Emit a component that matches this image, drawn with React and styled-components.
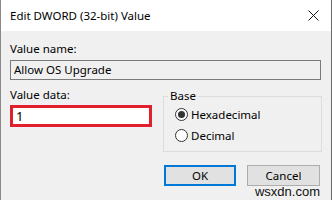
import React from 'react'
import styled, { createGlobalStyle } from 'styled-components'

const GlobalStyle = createGlobalStyle`
  html, body {
    margin: 0;
    padding: 0;
    background: #f0f0f0;
  }
  * {
    box-sizing: border-box;
  }
`

const Dialog = styled.div`
  position: relative;
  width: 332px;
  height: 200px;
  background: #f0f0f0;
  border-left: 1px solid #8a8a8a;
  border-right: 1px solid #6a6a6a;
  font-family: "Noto Sans", "Liberation Sans", sans-serif;
  font-size: 11.5px;
  color: #000;
  overflow: hidden;
`

const TitleBar = styled.div`
  height: 31px;
  background: #fff;
  display: flex;
  align-items: center;
  justify-content: space-between;
  padding: 0 12px 0 9px;
`

const Body = styled.div`
  padding: 10px 10px 0 9px;
  display: flex;
  flex-direction: column;
`

const Label = styled.div`
  line-height: 16px;
  height: 16px;
`

const TextBox = styled.div`
  margin-top: 3px;
  height: 20px;
  border: 1px solid #7a7a7a;
  background: #f0f0f0;
  padding-left: 3px;
  line-height: 18px;
`

const Row = styled.div`
  display: grid;
  grid-template-columns: 142px 159px;
  column-gap: 11px;
  margin-top: 7px;
`

const DataCol = styled.div`
  display: flex;
  flex-direction: column;
`

const Highlight = styled.div`
  margin-top: 2px;
  height: 22px;
  border: 3px solid #e0202e;
  background: #fff;
  padding-left: 3px;
  line-height: 16px;
  font-size: 13px;
`

const Group = styled.div`
  margin-top: 9px;
  height: 56px;
  border: 1px solid #dcdcdc;
  position: relative;
  padding: 10px 0 0 11px;
  display: flex;
  flex-direction: column;
  gap: 6px;
`

const Legend = styled.span`
  position: absolute;
  top: -8px;
  left: 4px;
  padding: 0 2px;
  background: #f0f0f0;
  line-height: 14px;
`

const Radio = styled.label`
  display: flex;
  align-items: center;
  gap: 3px;
  height: 15px;
  line-height: 15px;
`

const Circle = styled.span`
  width: 13px;
  height: 13px;
  border-radius: 50%;
  border: 1px solid #333;
  background: #fff;
  display: flex;
  align-items: center;
  justify-content: center;
  &::after {
    content: '';
    width: 7px;
    height: 7px;
    border-radius: 50%;
    background: ${p => (p.$checked ? '#333' : 'transparent')};
  }
`

const Buttons = styled.div`
  display: flex;
  justify-content: flex-end;
  gap: 11px;
  margin-top: 13px;
  padding-right: 1px;
`

const Button = styled.div`
  width: ${p => (p.$default ? '72px' : '73px')};
  height: 21px;
  background: #e1e1e1;
  border: ${p => (p.$default ? '2px solid #0078d7' : '1px solid #adadad')};
  display: flex;
  align-items: center;
  justify-content: center;
`

const Watermark = styled.div`
  position: absolute;
  right: 11px;
  bottom: 1px;
  font-family: "Liberation Sans", Arial, sans-serif;
  font-size: 13px;
  line-height: 14px;
  color: #111;
`

const CloseIcon = () => (
  <svg width="11" height="11" viewBox="0 0 11 11">
    <path d="M0.5 0.5 L10.5 10.5 M10.5 0.5 L0.5 10.5" stroke="#111" strokeWidth="1" fill="none" />
  </svg>
)

const App = () => {
  return (
    <>
      <GlobalStyle />
      <Dialog>
        <TitleBar>
          <span>Edit DWORD (32-bit) Value</span>
          <CloseIcon />
        </TitleBar>
        <Body>
          <Label>Value name:</Label>
          <TextBox>Allow OS Upgrade</TextBox>
          <Row>
            <DataCol>
              <Label>Value data:</Label>
              <Highlight>1</Highlight>
            </DataCol>
            <Group>
              <Legend>Base</Legend>
              <Radio><Circle $checked />Hexadecimal</Radio>
              <Radio><Circle />Decimal</Radio>
            </Group>
          </Row>
          <Buttons>
            <Button $default>OK</Button>
            <Button>Cancel</Button>
          </Buttons>
        </Body>
        <Watermark>wsxdn.com</Watermark>
      </Dialog>
    </>
  )
}

export default App
